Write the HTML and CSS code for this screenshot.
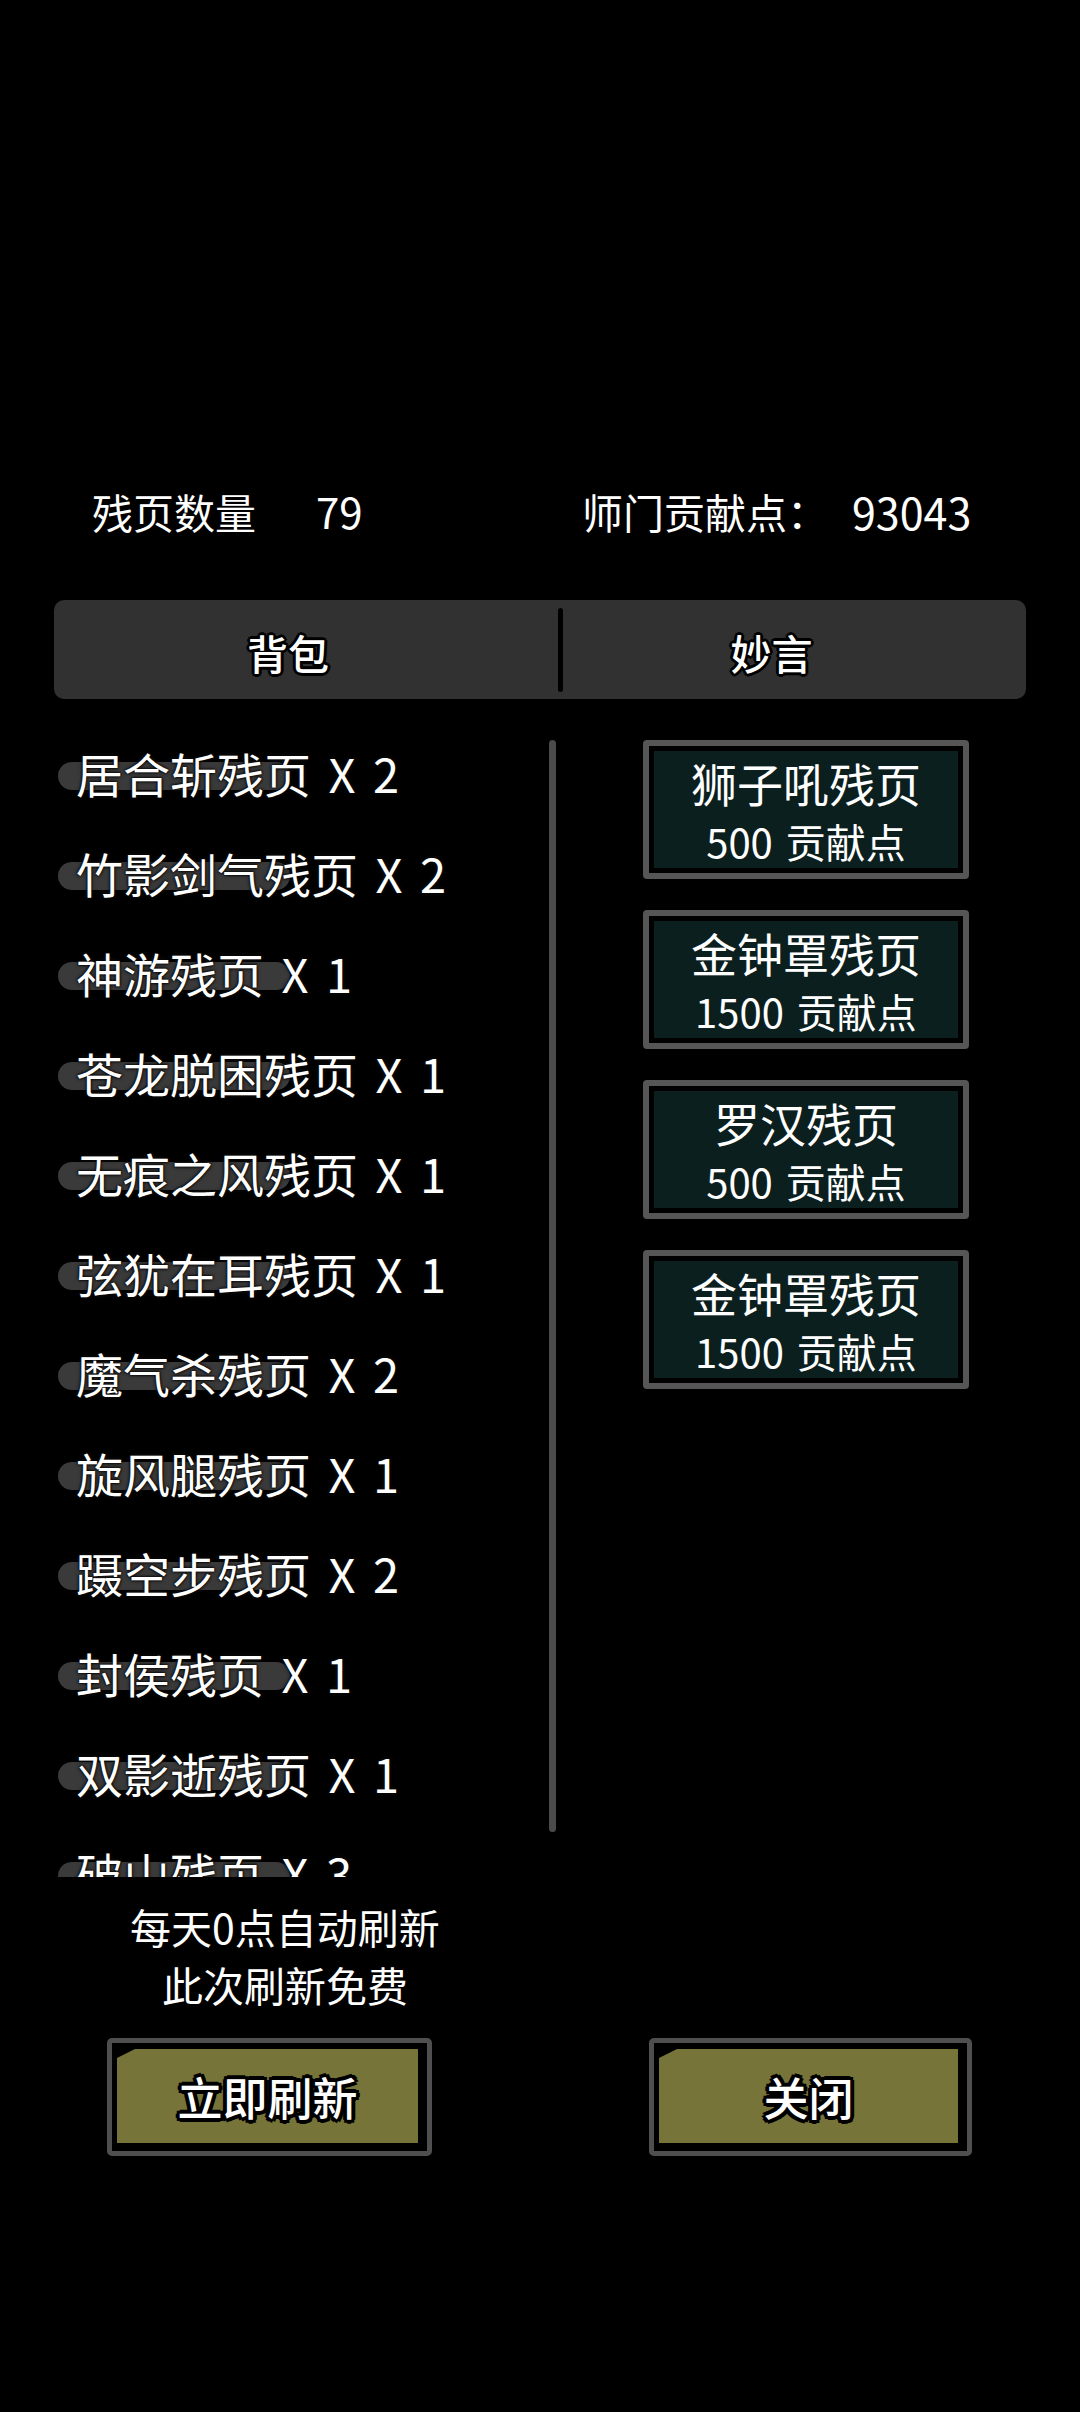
FILE: index.html
```html
<!DOCTYPE html>
<html lang="zh-CN">
<head>
<meta charset="utf-8">
<title>残页兑换</title>
<link rel="stylesheet" href="styles.css">
</head>
<body>
<div class="page">
  <header class="stats">
    <div class="stat stat-left"><span class="label">残页数量</span><span class="value value-left">79</span></div>
    <div class="stat stat-right"><span class="label">师门贡献点：</span><span class="value value-right">93043</span></div>
  </header>

  <nav class="tabs">
    <div class="tab tab-left"><span class="tab-text">背包</span></div>
    <div class="tab-divider"></div>
    <div class="tab tab-right"><span class="tab-text">妙言</span></div>
  </nav>

  <main class="main">
    <ul class="list">
      <li class="item"><span class="item-text">居合斩残页 X 2</span></li>
      <li class="item"><span class="item-text">竹影剑气残页 X 2</span></li>
      <li class="item"><span class="item-text">神游残页 X 1</span></li>
      <li class="item"><span class="item-text">苍龙脱困残页 X 1</span></li>
      <li class="item"><span class="item-text">无痕之风残页 X 1</span></li>
      <li class="item"><span class="item-text">弦犹在耳残页 X 1</span></li>
      <li class="item"><span class="item-text">魔气杀残页 X 2</span></li>
      <li class="item"><span class="item-text">旋风腿残页 X 1</span></li>
      <li class="item"><span class="item-text">蹑空步残页 X 2</span></li>
      <li class="item"><span class="item-text">封侯残页 X 1</span></li>
      <li class="item"><span class="item-text">双影逝残页 X 1</span></li>
      <li class="item"><span class="item-text">破山残页 X 3</span></li>
    </ul>
    <div class="scrollbar"></div>

    <div class="shop">
      <div class="card"><div class="card-inner"><div class="card-name">狮子吼残页</div><div class="card-price">500 贡献点</div></div></div>
      <div class="card"><div class="card-inner"><div class="card-name">金钟罩残页</div><div class="card-price">1500 贡献点</div></div></div>
      <div class="card"><div class="card-inner"><div class="card-name">罗汉残页</div><div class="card-price">500 贡献点</div></div></div>
      <div class="card"><div class="card-inner"><div class="card-name">金钟罩残页</div><div class="card-price">1500 贡献点</div></div></div>
    </div>
  </main>

  <div class="tips">
    <div>每天0点自动刷新</div>
    <div>此次刷新免费</div>
  </div>

  <div class="actions">
    <div class="btn btn-refresh"><div class="btn-face"><span class="btn-text">立即刷新</span></div></div>
    <div class="btn btn-close"><div class="btn-face"><span class="btn-text">关闭</span></div></div>
  </div>
</div>
</body>
</html>
```

FILE: styles.css
```css
* {
  box-sizing: border-box;
}

html, body {
  margin: 0;
  padding: 0;
  background: #000;
}

body {
  width: 1080px;
  height: 2412px;
  overflow: hidden;
  font-family: "Noto Sans CJK SC", "Noto Sans", sans-serif;
  color: #fff;
}

.page {
  padding-top: 481px;
}

/* ---------- header stats ---------- */
.stats {
  display: flex;
  height: 60px;
  line-height: 60px;
  font-size: 41px;
  padding-left: 92px;
}

.stat {
  display: flex;
  white-space: nowrap;
}

.stat-left {
  width: 490px;
}

.value-left {
  margin-left: 60px;
  font-size: 42px;
}

.value-right {
  margin-left: 24px;
  font-size: 43px;
}

/* ---------- tabs ---------- */
.tabs {
  margin: 59px 54px 0;
  height: 99px;
  background: #313131;
  border-radius: 10px;
  display: flex;
  align-items: center;
}

.tab {
  height: 100%;
  display: flex;
  align-items: center;
  justify-content: center;
  padding-top: 6px;
}

.tab-left {
  width: 504px;
  padding-right: 36px;
}

.tab-right {
  flex: 1;
  padding-right: 46px;
}

.tab-divider {
  width: 5px;
  height: 84px;
  background: #000;
  border-radius: 3px;
}

.tab-text {
  font-size: 41px;
  font-weight: 500;
  line-height: 1;
  text-shadow:
    3px 0 0 #000, -3px 0 0 #000, 0 3px 0 #000, 0 -3px 0 #000,
    2px 2px 0 #000, -2px 2px 0 #000, 2px -2px 0 #000, -2px -2px 0 #000;
}

/* ---------- main area ---------- */
.main {
  position: relative;
  margin-top: 28px;
  height: 1150px;
  display: flex;
  align-items: flex-start;
}

.list {
  list-style: none;
  margin: 0;
  padding: 0;
  width: 580px;
  height: 1150px;
  overflow: hidden;
}

.item {
  position: relative;
  height: 100px;
  display: flex;
  align-items: center;
  padding-left: 76px;
  padding-bottom: 10px;
}

.item::before {
  content: "";
  position: absolute;
  left: 58px;
  top: 35px;
  width: 232px;
  height: 28px;
  border-radius: 14px;
  background: #3a3a3a;
}

.item-text {
  position: relative;
  font-size: 47px;
  line-height: 1;
  word-spacing: 7px;
  white-space: nowrap;
  text-shadow: 0 0 2px #000, 0 0 3px #000, 0 0 4px #222;
}

.scrollbar {
  position: absolute;
  left: 549px;
  top: 13px;
  width: 7px;
  height: 1092px;
  border-radius: 4px;
  background: #4b4b4b;
}

.shop {
  margin-left: 63px;
  margin-top: 13px;
  display: flex;
  flex-direction: column;
  gap: 31px;
}

.card {
  width: 326px;
  height: 139px;
  border: 6px solid #565656;
  border-radius: 4px;
  background: #000;
  padding: 5px;
}

.card-inner {
  height: 117px;
  background: #0c1f1f;
  text-align: center;
  white-space: nowrap;
}

.card-name {
  font-size: 46px;
  line-height: 62px;
}

.card-price {
  font-size: 40px;
  line-height: 56px;
  word-spacing: 4px;
}

/* ---------- tips ---------- */
.tips {
  margin-top: 20px;
  width: 570px;
  text-align: center;
  font-size: 41px;
  line-height: 58px;
}

/* ---------- buttons ---------- */
.actions {
  margin-top: 25px;
  display: flex;
  padding-left: 107px;
  gap: 217px;
}

.btn {
  width: 325px;
  height: 118px;
  border: 5px solid #4f4f4f;
  border-radius: 5px;
  background: #000;
  padding: 6px 9px 8px 5px;
}

.btn-close {
  width: 323px;
}

.btn-face {
  height: 100%;
  background: #77743a;
  clip-path: polygon(18px 0, 100% 0, 100% 100%, 0 100%, 0 9px);
  display: flex;
  align-items: center;
  justify-content: center;
  padding-top: 0;
}

.btn-text {
  font-size: 45px;
  font-weight: 500;
  line-height: 1;
  text-shadow:
    4px 0 0 #000, -4px 0 0 #000, 0 4px 0 #000, 0 -4px 0 #000,
    3px 3px 0 #000, -3px 3px 0 #000, 3px -3px 0 #000, -3px -3px 0 #000;
}
```
